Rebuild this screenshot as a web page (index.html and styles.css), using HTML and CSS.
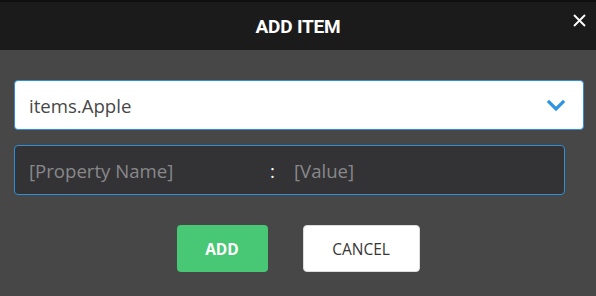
FILE: index.html
```html
<!DOCTYPE html>
<html lang="en">
<head>
<meta charset="utf-8">
<title>Add Item</title>
<link rel="stylesheet" href="styles.css">
</head>
<body>
<div class="dialog">
  <div class="topline"></div>
  <header class="header">
    <span class="spacer"></span>
    <h1 class="title">ADD ITEM</h1>
    <button class="close" aria-label="Close">
      <svg width="13" height="13" viewBox="0 0 13 13"><path d="M1 1 L12 12 M12 1 L1 12" stroke="#ffffff" stroke-width="1.8" fill="none"/></svg>
    </button>
  </header>
  <main class="content">
    <div class="select">
      <span class="select-value">items.Apple</span>
      <svg class="chevron" width="18" height="11" viewBox="0 0 18 11"><path d="M2 2 L9 9 L16 2" stroke="#2f95e0" stroke-width="3.2" fill="none" stroke-linecap="square"/></svg>
    </div>
    <div class="prop-row">
      <input class="prop-name" type="text" placeholder="[Property Name]">
      <span class="colon">:</span>
      <input class="prop-value" type="text" placeholder="[Value]">
    </div>
    <div class="actions">
      <button class="btn btn-add">ADD</button>
      <button class="btn btn-cancel">CANCEL</button>
    </div>
  </main>
</div>
</body>
</html>
```

FILE: styles.css
```css
html, body {
  margin: 0;
  padding: 0;
  background: #474747;
  width: 596px;
  height: 296px;
  overflow: hidden;
}

.dialog {
  display: flex;
  flex-direction: column;
  font-family: "Open Sans", "Noto Sans", sans-serif;
}

.topline {
  height: 2px;
  background: #0f0f0f;
}

.header {
  height: 48px;
  background: #1b1b1b;
  display: grid;
  grid-template-columns: 1fr auto 1fr;
  align-items: center;
}

.title {
  margin: 0;
  font-family: Roboto, "Liberation Sans", sans-serif;
  font-weight: 700;
  font-size: 19px;
  color: #ffffff;
  letter-spacing: -0.2px;
}

.close {
  justify-self: end;
  align-self: start;
  margin: 12px 10px 0 0;
  padding: 0;
  border: 0;
  background: transparent;
  width: 13px;
  height: 13px;
  display: flex;
}

.content {
  padding: 30px 12px 0 14px;
  display: flex;
  flex-direction: column;
}

.select {
  height: 50px;
  box-sizing: border-box;
  border: 1px solid #2e8fd8;
  border-radius: 4px;
  background: #ffffff;
  display: flex;
  align-items: center;
  justify-content: space-between;
  padding: 0 18px 0 14px;
}

.select-value {
  font-size: 18.6px;
  color: #474747;
}

.chevron {
  display: block;
}

.prop-row {
  margin-top: 15px;
  margin-right: 19px;
  height: 50px;
  box-sizing: border-box;
  border: 1px solid #2e8fd8;
  border-radius: 4px;
  background: #333335;
  display: flex;
  align-items: center;
  padding: 0 0 0 14px;
}

.prop-row input {
  border: 0;
  outline: none;
  background: transparent;
  font-family: "Open Sans", "Noto Sans", sans-serif;
  font-size: 18.6px;
  color: #dddddd;
  padding: 0;
}

.prop-row input::placeholder {
  color: #88888c;
}

.prop-name {
  width: 241px;
}

.colon {
  color: #ffffff;
  font-size: 18.6px;
  width: 24px;
}

.prop-value {
  flex: 1;
}

.actions {
  margin-top: 30px;
  margin-right: -12px;
  margin-left: -14px;
  display: flex;
  justify-content: center;
  gap: 35px;
}

.btn {
  height: 47px;
  border-radius: 4px;
  font-family: "Open Sans", "Noto Sans", sans-serif;
  font-size: 15.5px;
  padding: 0;
  cursor: pointer;
}

.btn-add {
  width: 91px;
  background: #48c774;
  border: 0;
  color: #ffffff;
  font-weight: 700;
}

.btn-cancel {
  width: 117px;
  background: #ffffff;
  border: 1px solid #dcdcdc;
  color: #363636;
  font-weight: 400;
}
```
